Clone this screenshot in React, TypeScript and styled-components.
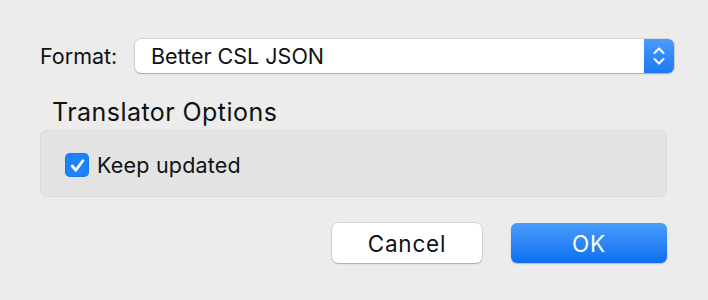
import React, { useState } from 'react';
import styled, { createGlobalStyle } from 'styled-components';

const GlobalStyle = createGlobalStyle`
    html, body {
        margin: 0;
        padding: 0;
        background: #ececec;
    }
    body {
        font-family: Inter, "Liberation Sans", sans-serif;
        color: #111;
        -webkit-font-smoothing: antialiased;
    }
`;

const Dialog = styled.div`
    width: 708px;
    height: 300px;
    box-sizing: border-box;
    padding: 39px 34px 0 40px;
    display: flex;
    flex-direction: column;
`;

const FormatRow = styled.div`
    display: flex;
    align-items: center;
    gap: 14px;
    height: 34px;
`;

const Label = styled.span`
    font-size: 21.5px;
    width: 81px;
`;

const SelectBox = styled.div`
    flex: 1;
    height: 34px;
    display: flex;
    background: #fff;
    border-radius: 6px;
    box-shadow: 0 0 0 0.5px rgba(0, 0, 0, 0.18), 0 1px 1.5px rgba(0, 0, 0, 0.22);
    overflow: hidden;
`;

const SelectValue = styled.div`
    flex: 1;
    display: flex;
    align-items: center;
    padding-left: 16px;
    font-size: 21.5px;
`;

const Stepper = styled.div`
    width: 30px;
    display: flex;
    align-items: center;
    justify-content: center;
    background: linear-gradient(#4b9bfb, #1a79f5);
`;

const SectionTitle = styled.h2`
    margin: 24px 0 0 12px;
    font-size: 25px;
    font-weight: 400;
    letter-spacing: 0.45px;
    line-height: 30px;
`;

const GroupBox = styled.div`
    margin: 3px 7px 0 0;
    height: 67px;
    box-sizing: border-box;
    background: #e3e3e3;
    border: 1px solid #dadada;
    border-radius: 7px;
    display: flex;
    align-items: center;
    padding: 0 0 0 24px;
`;

const CheckLabel = styled.label`
    display: flex;
    align-items: center;
    gap: 8px;
    font-size: 21.5px;
    letter-spacing: 0.2px;
    cursor: default;
    margin-top: 3px;
`;

const CheckBox = styled.span<{ $checked: boolean }>`
    width: 24px;
    height: 24px;
    border-radius: 5px;
    display: flex;
    align-items: center;
    justify-content: center;
    background: ${({ $checked }) => ($checked ? '#1b83fb' : '#fff')};
    box-shadow: inset 0 0 0 0.5px rgba(0, 0, 0, 0.15);
`;

const Buttons = styled.div`
    display: flex;
    justify-content: flex-end;
    gap: 29px;
    margin: 26px 7px 0 0;
`;

const Button = styled.button<{ $primary?: boolean }>`
    height: 40px;
    width: ${({ $primary }) => ($primary ? '156px' : '150px')};
    border: none;
    border-radius: 6px;
    font-family: inherit;
    font-size: 22.5px;
    letter-spacing: 0.8px;
    color: ${({ $primary }) => ($primary ? '#fff' : '#111')};
    background: ${({ $primary }) =>
        $primary ? 'linear-gradient(#4a9cfb, #0d6ff1)' : '#fff'};
    box-shadow: ${({ $primary }) =>
        $primary
            ? '0 1px 1.5px rgba(0, 0, 0, 0.2)'
            : '0 0 0 0.5px rgba(0, 0, 0, 0.18), 0 1px 1.5px rgba(0, 0, 0, 0.22)'};
`;

const App = () => {
    const [keepUpdated, setKeepUpdated] = useState(true);

    return (
        <>
            <GlobalStyle />
            <Dialog>
                <FormatRow>
                    <Label>Format:</Label>
                    <SelectBox>
                        <SelectValue>Better CSL JSON</SelectValue>
                        <Stepper>
                            {/* up/down chevrons */}
                            <svg width="14" height="22" viewBox="0 0 14 22" fill="none" stroke="#fff" strokeWidth="2" strokeLinecap="round" strokeLinejoin="round">
                                <path d="M2.5 8 L7 3.5 L11.5 8" />
                                <path d="M2.5 14 L7 18.5 L11.5 14" />
                            </svg>
                        </Stepper>
                    </SelectBox>
                </FormatRow>

                <SectionTitle>Translator Options</SectionTitle>
                <GroupBox>
                    <CheckLabel onClick={() => setKeepUpdated(!keepUpdated)}>
                        <CheckBox $checked={keepUpdated}>
                            {keepUpdated && (
                                <svg width="17" height="17" viewBox="0 0 16 16" fill="none" stroke="#fff" strokeWidth="2.6" strokeLinecap="round" strokeLinejoin="round">
                                    <path d="M3 8.5 L6.5 12.5 L13 3.5" />
                                </svg>
                            )}
                        </CheckBox>
                        Keep updated
                    </CheckLabel>
                </GroupBox>

                <Buttons>
                    <Button>Cancel</Button>
                    <Button $primary>OK</Button>
                </Buttons>
            </Dialog>
        </>
    );
};

export default App;
